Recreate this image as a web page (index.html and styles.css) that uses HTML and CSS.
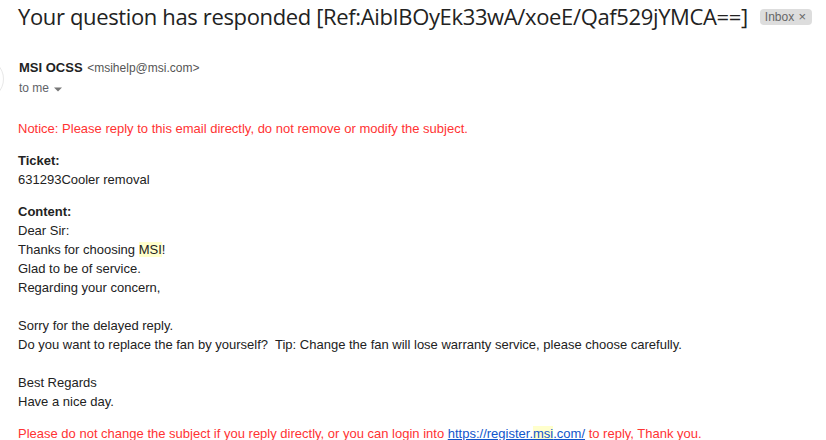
FILE: index.html
```html
<!DOCTYPE html>
<html>
<head>
<meta charset="utf-8">
<link rel="stylesheet" href="styles.css">
</head>
<body>
<div class="subject-row">
  <h1 class="subject">Your question has responded [Ref:AibIBOyEk33wA/xoeE/Qaf529jYMCA==]</h1>
  <span class="label">Inbox <span class="label-x">×</span></span>
</div>
<div class="sender-row">
  <div class="avatar"></div>
  <div class="sender-info">
    <div class="from"><span class="name">MSI OCSS</span> <span class="addr">&lt;msihelp@msi.com&gt;</span></div>
    <div class="to">to me <svg class="caret" width="10" height="10" viewBox="0 0 10 10"><path d="M1 3.5h8L5 7.5z" fill="#777"/></svg></div>
  </div>
</div>
<div class="body">
  <p class="warn">Notice: Please reply to this email directly, do not remove or modify the subject.</p>
  <p><b>Ticket:</b><br>631293Cooler removal</p>
  <p><b>Content:</b><br>Dear Sir:<br>Thanks for choosing <span class="hl">MSI</span>!<br>Glad to be of service.<br>Regarding your concern,<br><br>Sorry for the delayed reply.<br>Do you want to replace the fan by yourself?&nbsp; Tip: Change the fan will lose warranty service, please choose carefully.<br><br>Best Regards<br>Have a nice day.</p>
  <p class="warn">Please do not change the subject if you reply directly, or you can login into <a href="#">https://register.<span class="hl">msi</span>.com/</a> to reply, Thank you.</p>
</div>
</body>
</html>
```
FILE: styles.css
```css
html, body {
  margin: 0;
  padding: 0;
  background: #fff;
}
body {
  font-family: "Liberation Sans", Arial, sans-serif;
  color: #222;
  font-size: 13px;
  overflow: hidden;
}
.subject-row {
  display: flex;
  align-items: center;
  padding: 0 0 0 18px;
  height: 32px;
}
.subject {
  margin: 0;
  font-family: "Open Sans", sans-serif;
  font-weight: 400;
  font-size: 22px;
  color: #222;
  white-space: nowrap;
  letter-spacing: -0.36px;
}
.label {
  flex: none;
  white-space: nowrap;
  margin-left: 12px;
  background: #ddd;
  color: #666;
  font-size: 12px;
  border-radius: 4px;
  padding: 0 6px 0 5px;
  line-height: 16px;
  margin-top: 1px;
}
.label-x {
  font-size: 13px;
  color: #666;
  margin-left: 1px;
}
.sender-row {
  display: flex;
  margin-top: 26px;
}
.avatar {
  width: 40px;
  height: 40px;
  border-radius: 50%;
  border: 1px solid #e8e8e8;
  margin-left: -38px;
  margin-right: 15px;
  flex: none;
}
.from {
  line-height: 20px;
  font-size: 13px;
}
.name {
  font-weight: bold;
  color: #222;
}
.addr {
  color: #555;
  font-size: 12px;
  margin-left: 1px;
}
.to {
  color: #5f6368;
  font-size: 12px;
  line-height: 20px;
  display: flex;
  align-items: center;
  gap: 4px;
}
.caret { margin-top: 1px; }
.body {
  padding: 0 18px;
  margin-top: 19px;
  line-height: 19px;
}
.body p {
  margin: 0 0 13px 0;
}
.warn {
  color: #f33;
}
.hl {
  background: #ffffcc;
}
a {
  color: #15c;
  text-decoration: underline;
}
```
